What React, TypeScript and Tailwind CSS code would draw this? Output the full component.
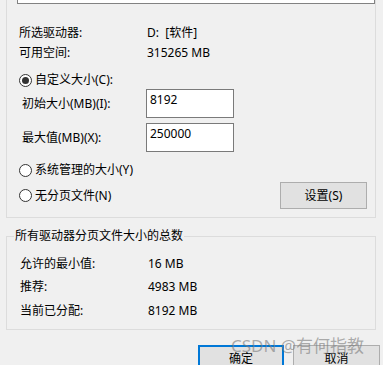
export default function App() {
  const Radio = ({ checked }: { checked?: boolean }) => (
    <span className="w-[13px] h-[13px] rounded-full border border-[#333333] bg-white flex items-center justify-center shrink-0">
      {checked && <span className="w-[7px] h-[7px] rounded-full bg-[#333333]" />}
    </span>
  );
  return (
    <div className="relative w-[383px] h-[365px] overflow-hidden bg-[#f0f0f0] text-[12px] text-black font-['Noto_Sans','Noto_Sans_CJK_SC',sans-serif]">
      <div className="ml-[6px] w-[370px] h-[218px] border-x border-b border-[#dcdcdc]">
        <div className="ml-[10px] w-[358px] h-[4px] bg-white border-x border-b border-[#828282]" />
        <div className="mt-[19px] pl-[12px] flex h-[20px] items-center leading-[20px]">
          <span className="w-[128px]">所选驱动器:</span>
          <span>D:&nbsp;&nbsp;[软件]</span>
        </div>
        <div className="pl-[12px] flex h-[20px] items-center leading-[20px]">
          <span className="w-[128px]">可用空间:</span>
          <span>315265 MB</span>
        </div>
        <div className="mt-[8px] pl-[12px] flex h-[18px] items-center gap-[3px] leading-[18px]">
          <Radio checked />
          <span>自定义大小(C):</span>
        </div>
        <div className="pl-[15px] flex h-[29px] items-center">
          <span className="w-[124px] leading-[20px]">初始大小(MB)(I):</span>
          <div className="w-[88px] h-[29px] border border-[#7a7a7a] bg-white pl-[3px] pt-[2px] leading-[16px]">8192</div>
        </div>
        <div className="mt-[5px] pl-[15px] flex h-[29px] items-center">
          <span className="w-[124px] leading-[20px]">最大值(MB)(X):</span>
          <div className="w-[88px] h-[29px] border border-[#7a7a7a] bg-white pl-[3px] pt-[2px] leading-[16px]">250000</div>
        </div>
        <div className="mt-[9px] pl-[12px] flex h-[18px] items-center gap-[3px] leading-[18px]">
          <Radio />
          <span>系统管理的大小(Y)</span>
        </div>
        <div className="mt-[3px] pl-[12px] flex h-[27px] items-center gap-[3px]">
          <Radio />
          <span className="leading-[18px]">无分页文件(N)</span>
          <div className="ml-auto mr-[8px] w-[87px] h-[27px] bg-[#e1e1e1] border border-[#adadad] flex items-center justify-center leading-[18px]">
            设置(S)
          </div>
        </div>
      </div>

      <div className="relative mt-[18px] ml-[6px] w-[370px] h-[94px] border border-[#dcdcdc]">
        <span className="absolute -top-[11px] left-[7px] px-[1px] bg-[#f0f0f0] leading-[20px]">所有驱动器分页文件大小的总数</span>
        <div className="mt-[17px] pl-[13px] flex h-[20px] items-center leading-[20px]">
          <span className="w-[128px]">允许的最小值:</span>
          <span>16 MB</span>
        </div>
        <div className="mt-[3px] pl-[13px] flex h-[20px] items-center leading-[20px]">
          <span className="w-[128px]">推荐:</span>
          <span>4983 MB</span>
        </div>
        <div className="mt-[4px] pl-[13px] flex h-[20px] items-center leading-[20px]">
          <span className="w-[128px]">当前已分配:</span>
          <span>8192 MB</span>
        </div>
      </div>

      <div className="mt-[15px] ml-[198px] flex gap-[9px]">
        <div className="w-[86px] h-[27px] bg-[#e1e1e1] border-2 border-[#0078d7] flex items-center justify-center leading-[18px]">确定</div>
        <div className="w-[87px] h-[27px] bg-[#e1e1e1] border border-[#adadad] flex items-center justify-center leading-[18px]">取消</div>
      </div>

      <div className="absolute left-[231px] top-[335px] text-[17px] leading-[22px] text-[#7a7a7a]/60 whitespace-nowrap">
        CSDN @有何指教
      </div>
    </div>
  );
}
